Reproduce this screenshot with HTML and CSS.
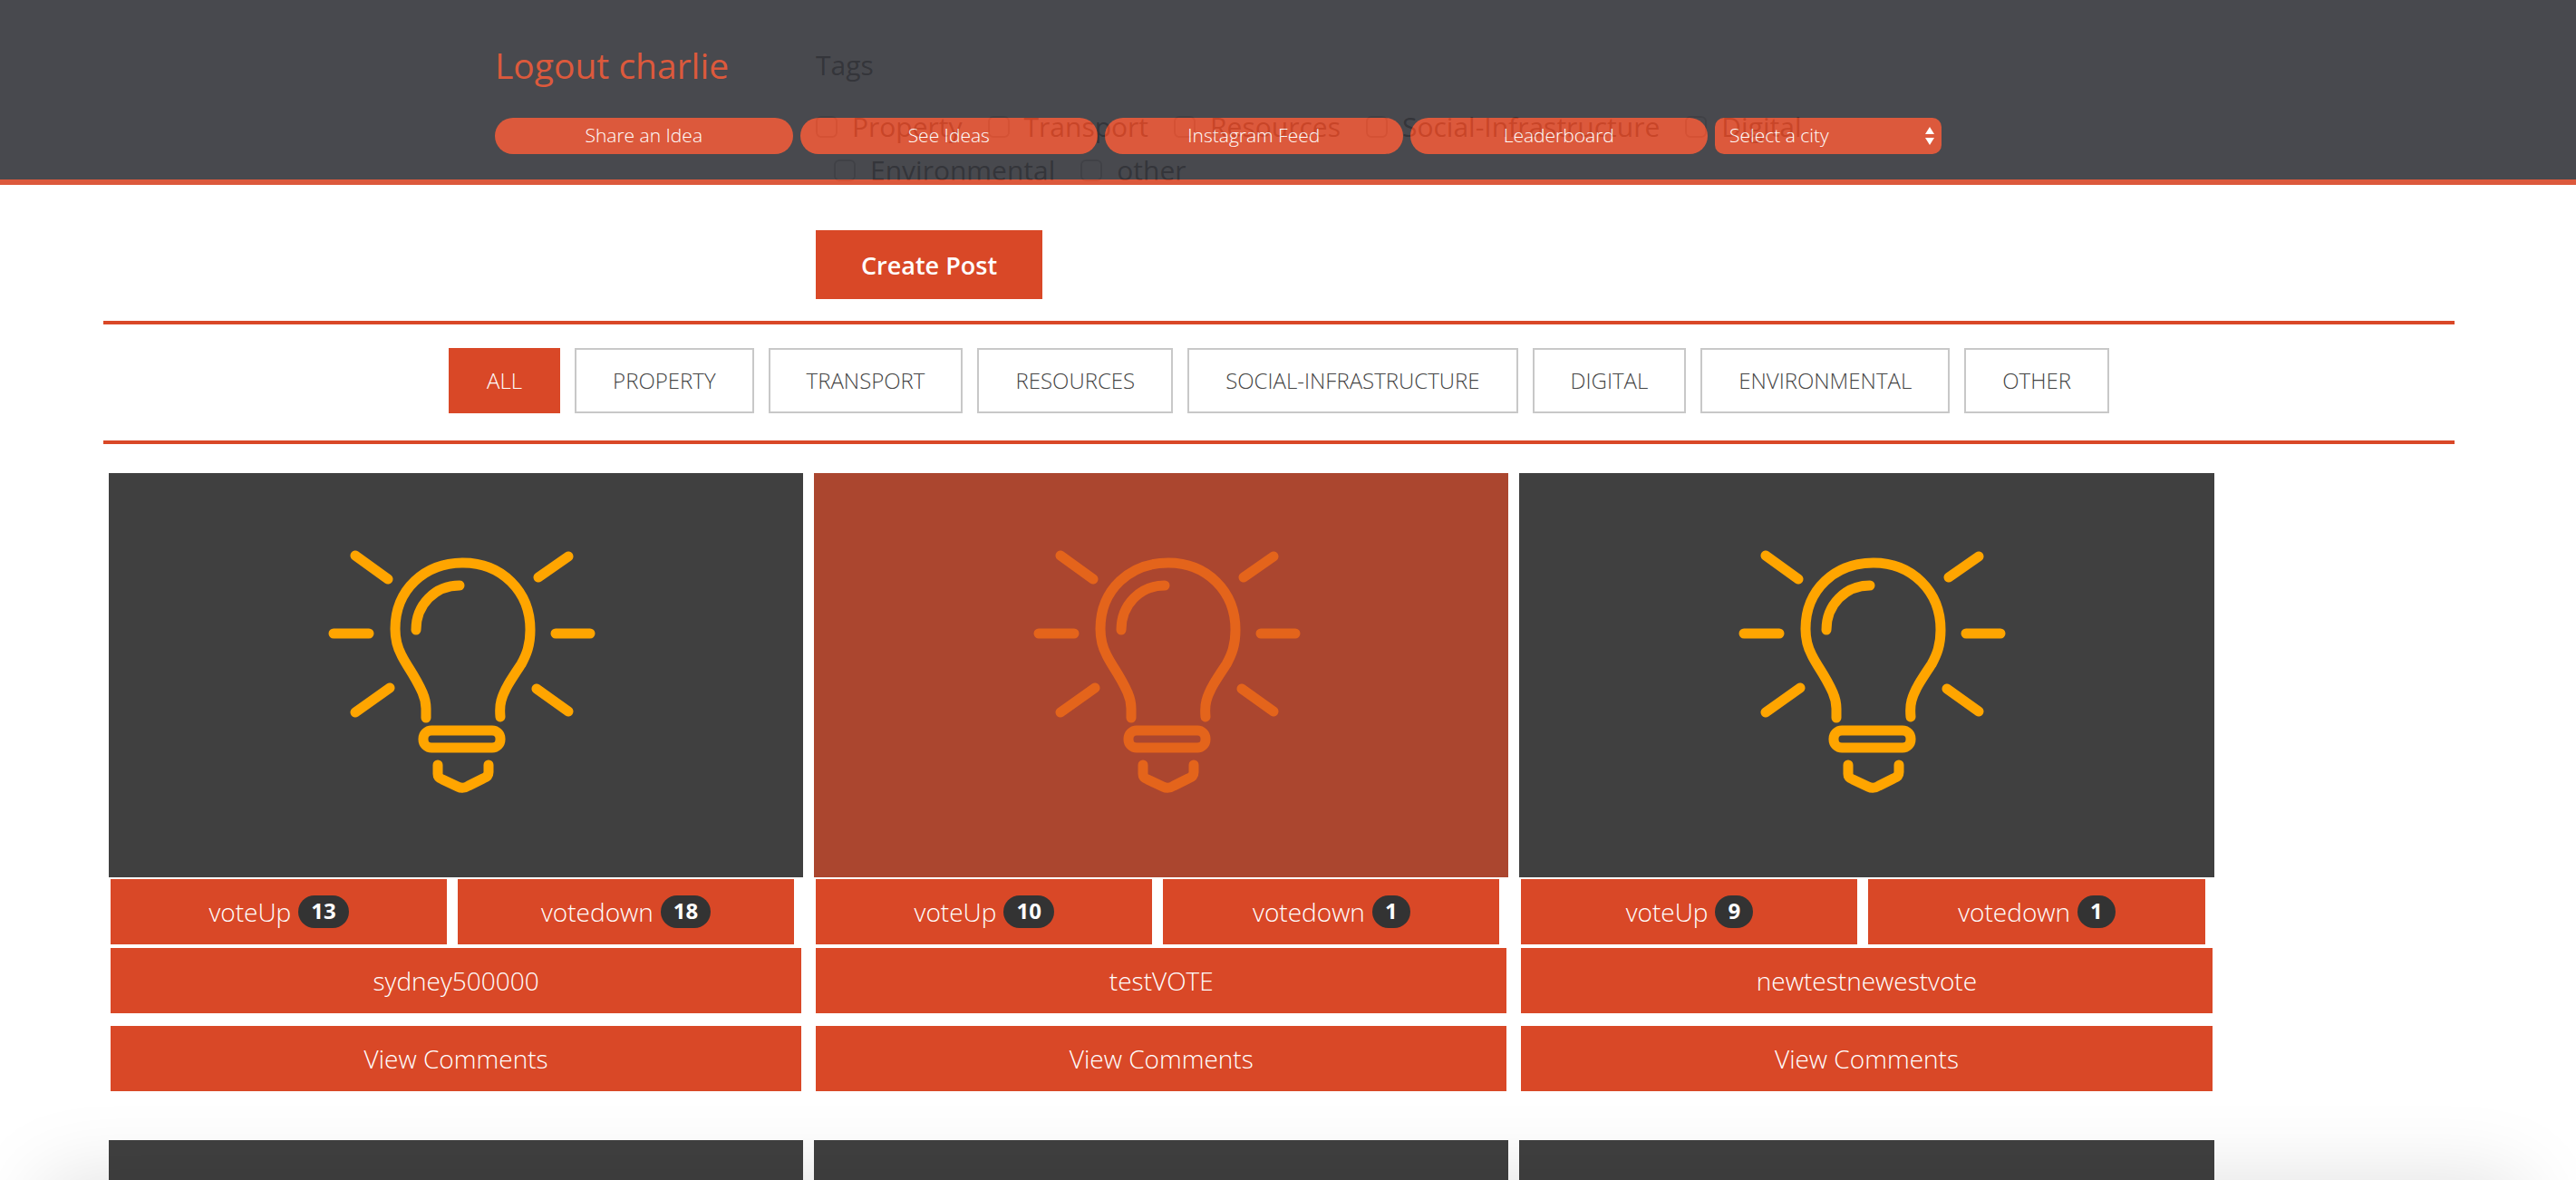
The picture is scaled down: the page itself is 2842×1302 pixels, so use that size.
FILE: index.html
```html
<!DOCTYPE html>
<html lang="en">
<head>
<meta charset="utf-8">
<title>Ideas</title>
<link rel="stylesheet" href="styles.css">
</head>
<body>
<svg class="sprite" aria-hidden="true">
  <symbol id="bulb" viewBox="0 0 340 320">
    <g fill="none" stroke="currentColor" stroke-width="11" stroke-linecap="round" stroke-linejoin="round">
      <path d="M130 212V202Q130 193 126 184C117 164 110 157 103 143Q96 130 96 114C96 70 129 41 171 41S245 72 245 115C245 132 241 142 235 153C225 168 216 181 213 193Q211 200 212 211"/>
      <path d="M119 115C119 87 140 66 167 66"/>
      <path d="M52 33L88 59M287 34L254 57M28 119H67M273 119H311M52 206L90 179M252 180L287 205"/>
      <rect x="127" y="226" width="85" height="19" rx="9"/>
      <path d="M143 264V274Q143 278 148 280L165 288Q171 291 177 287L193 279Q199 277 199 272V264"/>
    </g>
  </symbol>
</svg>

<header class="topbar">
  <a class="logout" href="#">Logout charlie</a>
  <nav class="nav">
    <button class="pill" type="button">Share an Idea</button>
    <button class="pill" type="button">See Ideas</button>
    <button class="pill" type="button">Instagram Feed</button>
    <button class="pill" type="button">Leaderboard</button>
    <div class="city">
      <select class="city-select" aria-label="Select a city"><option>Select a city</option></select>
      <svg class="city-arrows" viewBox="0 0 10 20" aria-hidden="true"><path d="M5 0L10 8H0ZM5 20L0 12H10Z" fill="#fff"/></svg>
    </div>
  </nav>
</header>

<main>
  <form class="post-form">
    <p class="form-title">Tags</p>
    <div class="tags">
      <div class="tag-row">
        <label class="tag"><input type="checkbox">Property</label>
        <label class="tag"><input type="checkbox">Transport</label>
        <label class="tag"><input type="checkbox">Resources</label>
        <label class="tag"><input type="checkbox">Social-Infrastructure</label>
        <label class="tag"><input type="checkbox">Digital</label>
      </div>
      <div class="tag-row tag-row-next">
        <label class="tag"><input type="checkbox">Environmental</label>
        <label class="tag"><input type="checkbox">other</label>
      </div>
    </div>
    <button class="create" type="button">Create Post</button>
  </form>

  <section class="board">
    <div class="filters">
      <button class="filter active" type="button">ALL</button>
      <button class="filter" type="button">PROPERTY</button>
      <button class="filter" type="button">TRANSPORT</button>
      <button class="filter" type="button">RESOURCES</button>
      <button class="filter" type="button">SOCIAL-INFRASTRUCTURE</button>
      <button class="filter" type="button">DIGITAL</button>
      <button class="filter" type="button">ENVIRONMENTAL</button>
      <button class="filter" type="button">OTHER</button>
    </div>

    <div class="cards">
      <article class="card">
        <div class="picture"><svg class="bulb"><use href="#bulb"/></svg></div>
        <div class="actions">
          <div class="votes">
            <button class="action" type="button">voteUp <span class="badge">13</span></button>
            <button class="action" type="button">votedown <span class="badge">18</span></button>
          </div>
          <button class="action" type="button">sydney500000</button>
          <button class="action comments" type="button">View Comments</button>
        </div>
      </article>
      <article class="card">
        <div class="picture hovered"><svg class="bulb"><use href="#bulb"/></svg></div>
        <div class="actions">
          <div class="votes">
            <button class="action" type="button">voteUp <span class="badge">10</span></button>
            <button class="action" type="button">votedown <span class="badge">1</span></button>
          </div>
          <button class="action" type="button">testVOTE</button>
          <button class="action comments" type="button">View Comments</button>
        </div>
      </article>
      <article class="card">
        <div class="picture"><svg class="bulb"><use href="#bulb"/></svg></div>
        <div class="actions">
          <div class="votes">
            <button class="action" type="button">voteUp <span class="badge">9</span></button>
            <button class="action" type="button">votedown <span class="badge">1</span></button>
          </div>
          <button class="action" type="button">newtestnewestvote</button>
          <button class="action comments" type="button">View Comments</button>
        </div>
      </article>
      <article class="card"><div class="picture"><svg class="bulb"><use href="#bulb"/></svg></div></article>
      <article class="card"><div class="picture"><svg class="bulb"><use href="#bulb"/></svg></div></article>
      <article class="card"><div class="picture"><svg class="bulb"><use href="#bulb"/></svg></div></article>
    </div>
  </section>
</main>
<div class="edge-shadow"></div>
</body>
</html>
```
FILE: styles.css
```css
:root {
  --accent: #d94827;
}

* { box-sizing: border-box; }

html { height: 100%; }

body {
  margin: 0;
  height: 100%;
  overflow: hidden;
  background: #fff;
  color: #333;
  font-family: "Open Sans", sans-serif;
  font-size: 30px;
  line-height: 40px;
}

button, select {
  margin: 0;
  border: 0;
  font-family: inherit;
  font-weight: 300;
  color: #fff;
  background: var(--accent);
  cursor: pointer;
}

.sprite { display: none; }

/* Fixed header, slightly see-through */
.topbar {
  position: fixed;
  top: 0;
  left: 0;
  right: 0;
  z-index: 2;
  padding: 44px 700px 28px 546px;
  background: #35363b;
  border-bottom: 6px solid var(--accent);
  opacity: 0.9;
}

.logout {
  display: block;
  width: max-content;
  margin-bottom: 30px;
  font-size: 39px;
  line-height: 56px;
  color: var(--accent);
  text-decoration: none;
}

.nav {
  display: flex;
  gap: 8px;
}

.pill {
  flex: 1;
  height: 40px;
  padding: 0 0 2px;
  border-radius: 20px;
  font-size: 21px;
  line-height: 38px;
}

.city {
  position: relative;
  flex: none;
  width: 250px;
}

.city-select {
  display: block;
  width: 100%;
  height: 40px;
  padding: 0 16px 2px;
  border-radius: 10px;
  appearance: none;
  font-size: 21px;
}

.city-arrows {
  position: absolute;
  top: 10px;
  right: 8px;
  width: 10px;
  height: 20px;
  pointer-events: none;
}

.post-form {
  padding: 52px 0 24px 900px;
}

.form-title { margin: 0 0 28px; }

.tags { margin-bottom: 46px; }

.tag-row {
  display: flex;
  gap: 28px;
  margin-bottom: 8px;
}

.tag-row-next { padding-left: 20px; }

.tag {
  display: flex;
  align-items: center;
  gap: 16px;
}

.tag input {
  width: 24px;
  height: 24px;
  margin: 0;
  appearance: none;
  background: #fff;
  border: 2px solid #aaa;
  border-radius: 6px;
}

.create {
  display: block;
  width: 250px;
  height: 76px;
  font-size: 27px;
  font-weight: 600;
}

.board { margin: 0 134px 0 114px; }

.filters {
  display: flex;
  justify-content: center;
  gap: 16px;
  padding: 26px 0 30px;
  border: solid var(--accent);
  border-width: 4px 0;
}

.filter {
  height: 72px;
  padding: 0 40px 2px;
  border: 2px solid #c8c8c8;
  background: #fff;
  color: #444;
  font-size: 24px;
}

.filter.active {
  border-color: var(--accent);
  background: var(--accent);
  color: #fff;
}

.cards {
  display: grid;
  grid-template-columns: repeat(3, 30%);
  row-gap: 54px;
  padding-top: 32px;
}

.card { padding: 0 6px; }

.picture {
  display: flex;
  justify-content: center;
  height: 446px;
  padding: 58px 0 0 14px;
  background: #404040;
  color: #ffa500;
}

.picture.hovered {
  background: #ab462f;
  color: #e4641b;
}

.bulb {
  width: 340px;
  height: 320px;
}

.actions {
  display: grid;
  gap: 4px;
  padding: 2px 2px 0;
}

.votes {
  display: grid;
  grid-template-columns: 1fr 1fr;
  gap: 12px;
  padding-right: 8px;
}

.action {
  display: flex;
  align-items: center;
  justify-content: center;
  gap: 8px;
  height: 72px;
  padding: 0;
  font-size: 28px;
  line-height: 36px;
}

.comments { margin-top: 10px; }

.badge {
  height: 36px;
  padding: 0 14px;
  border-radius: 20px;
  background: #333;
  font-size: 24px;
  font-weight: 700;
  line-height: 34px;
}

/* Soft shade rising from the bottom of the window */
.edge-shadow {
  position: fixed;
  z-index: 3;
  top: 100%;
  left: 48px;
  right: 60px;
  height: 100px;
  box-shadow: 0 0 90px rgba(0, 0, 0, 0.13);
  pointer-events: none;
}
```
